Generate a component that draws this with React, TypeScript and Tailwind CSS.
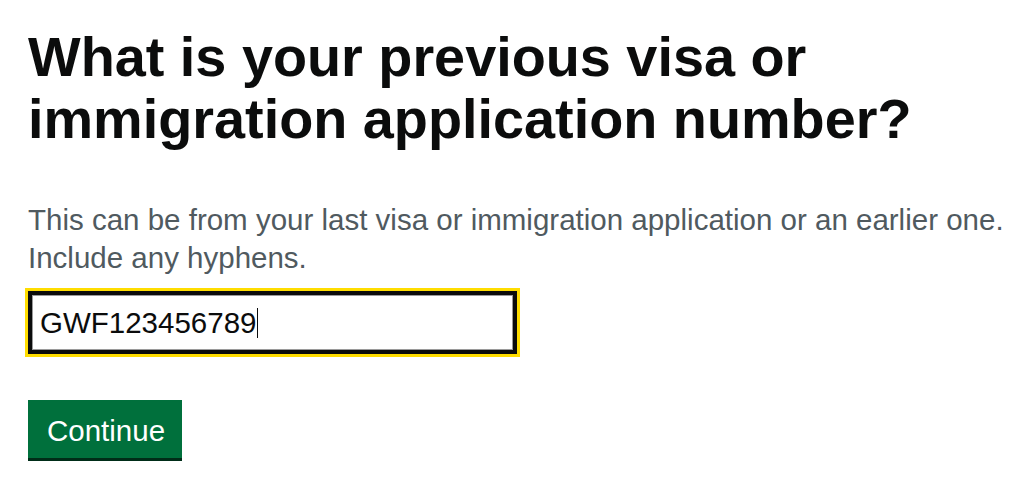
export default function App() {
  return (
    <main className="min-h-screen bg-white pl-[28px] pt-[26px] font-['Liberation_Sans',Arial,sans-serif] text-[#0b0c0c]">
      <h1 className="w-[900px] text-[55.8px] font-bold leading-[62px]">
        What is your previous visa or immigration application number?
      </h1>

      <p className="mt-[51px] text-[29.5px] leading-[38px] text-[#505a5f]">
        This can be from your last visa or immigration application or an earlier one.
        <br />
        Include any hyphens.
      </p>

      <div className="mt-[14px] w-[489px]">
        <div className="flex h-[63px] items-center border-4 border-[#0b0c0c] bg-white pl-[8px] shadow-[inset_0_0_0_1px_#9a9a9a] outline-3 outline-[#ffdd00]">
          <span className="text-[29.5px] leading-none">GWF123456789</span>
          <span className="ml-px h-[30px] w-px bg-[#0b0c0c]" />
        </div>
      </div>

      <button
        type="button"
        className="mt-[46px] h-[58px] w-[154px] bg-[#00703c] pl-[2px] pt-[3px] text-[29.5px] leading-none text-white shadow-[0_3px_0_#002d18]"
      >
        Continue
      </button>
    </main>
  );
}
